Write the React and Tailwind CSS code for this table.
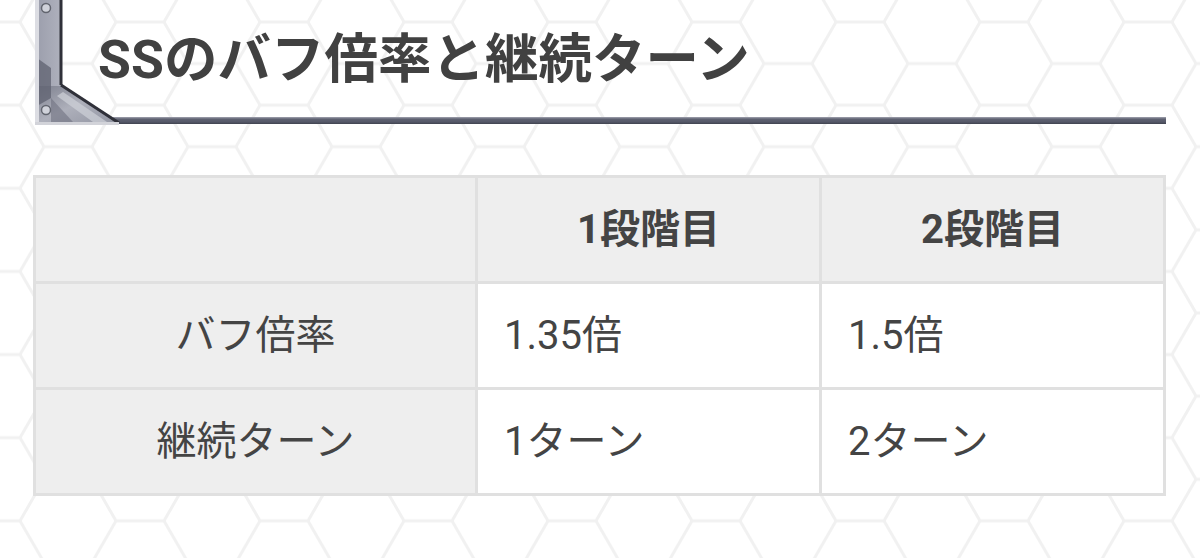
import React from "react";

const FONT = { fontFamily: 'Roboto, "Noto Sans CJK JP", "Noto Sans", sans-serif' };

function HexBackground() {
  const s = 48;
  const hh = 41.57;
  const hex = (cx, cy) =>
    `M${cx - s},${cy} L${cx - s / 2},${cy - hh} L${cx + s / 2},${cy - hh} L${cx + s},${cy} L${cx + s / 2},${cy + hh} L${cx - s / 2},${cy + hh} Z`;
  const d = [hex(0, 0), hex(144, 0), hex(0, 83.14), hex(144, 83.14), hex(72, 41.57)].join(" ");
  return (
    <svg className="absolute inset-0" width="1200" height="558" aria-hidden="true">
      <defs>
        <pattern id="hexp" x="68" y="22" width="144" height="83.14" patternUnits="userSpaceOnUse">
          <path d={d} fill="none" stroke="#f1f1f1" strokeWidth="3" />
        </pattern>
      </defs>
      <rect width="1200" height="558" fill="#ffffff" />
      <rect width="1200" height="558" fill="url(#hexp)" />
    </svg>
  );
}

function Bracket() {
  return (
    <svg className="absolute left-0 top-0" width="92" height="126" viewBox="0 0 92 126" aria-hidden="true">
      <defs>
        <linearGradient id="barg" x1="0" y1="0" x2="1" y2="0">
          <stop offset="0" stopColor="#9a9dab" />
          <stop offset="0.4" stopColor="#b4b6c1" />
          <stop offset="0.75" stopColor="#868998" />
          <stop offset="1" stopColor="#6a6d7b" />
        </linearGradient>
        <linearGradient id="gus" x1="0" y1="0" x2="1" y2="1">
          <stop offset="0" stopColor="#7f8290" />
          <stop offset="0.5" stopColor="#aeb0bb" />
          <stop offset="1" stopColor="#9396a3" />
        </linearGradient>
      </defs>
      <polygon points="2,0 29,0 29,85 84,121 84,125 2,125" fill="url(#barg)" />
      <polygon points="6,86 29,86 82,122 6,122" fill="url(#gus)" />
      <polygon points="4,58 18,68 18,98 4,106" fill="#5f6270" opacity="0.75" />
      <polygon points="18,98 40,122 18,122" fill="#6f7280" opacity="0.6" />
      <polygon points="30,92 74,122 60,122 24,96" fill="#cfd1d9" opacity="0.7" />
      <rect x="2" y="0" width="4" height="125" fill="#dcdde3" />
      <line x1="28" y1="0" x2="28" y2="85" stroke="#2f3039" strokeWidth="3" />
      <line x1="28" y1="85" x2="86" y2="123" stroke="#2f3039" strokeWidth="3" />
      <rect x="2" y="122" width="84" height="3" fill="#d2d3d9" />
      <circle cx="13" cy="8" r="4.5" fill="#d0d2da" stroke="#62656f" strokeWidth="1.5" />
      <circle cx="13" cy="110" r="4.5" fill="#d0d2da" stroke="#62656f" strokeWidth="1.5" />
    </svg>
  );
}

export default function App() {
  const head = "flex items-center justify-center bg-[#eeeeee] font-bold";
  const label = "flex items-center justify-center bg-[#eeeeee]";
  const cell = "flex items-center bg-white pl-[26px]";
  return (
    <div className="relative h-[558px] w-[1200px] overflow-hidden bg-white text-[#444444]" style={FONT}>
      <HexBackground />
      <div className="relative flex flex-col pl-[33px] pr-[34px]">
        <div className="relative h-[125px]">
          <Bracket />
          <div className="flex h-[117px] items-center pl-[65px] pt-[2px]">
            <h1 className="text-[53.5px] font-bold leading-none text-[#414141]">SSのバフ倍率と継続ターン</h1>
          </div>
          <div className="ml-[80px] h-[7px] bg-[linear-gradient(to_bottom,#a2a4b0,#5e6171_30%,#565969_70%,#40434f)]" />
        </div>
        <div className="mt-[50px] grid grid-cols-[439px_341px_341px] grid-rows-[103px_103px_103px] gap-[3px] bg-[#e0e0e0] p-[3px] text-[40px] leading-none">
          <div className={head}></div>
          <div className={head}>1段階目</div>
          <div className={head}>2段階目</div>
          <div className={label}>バフ倍率</div>
          <div className={cell}>1.35倍</div>
          <div className={cell}>1.5倍</div>
          <div className={label}>継続ターン</div>
          <div className={cell}>1ターン</div>
          <div className={cell}>2ターン</div>
        </div>
      </div>
    </div>
  );
}
